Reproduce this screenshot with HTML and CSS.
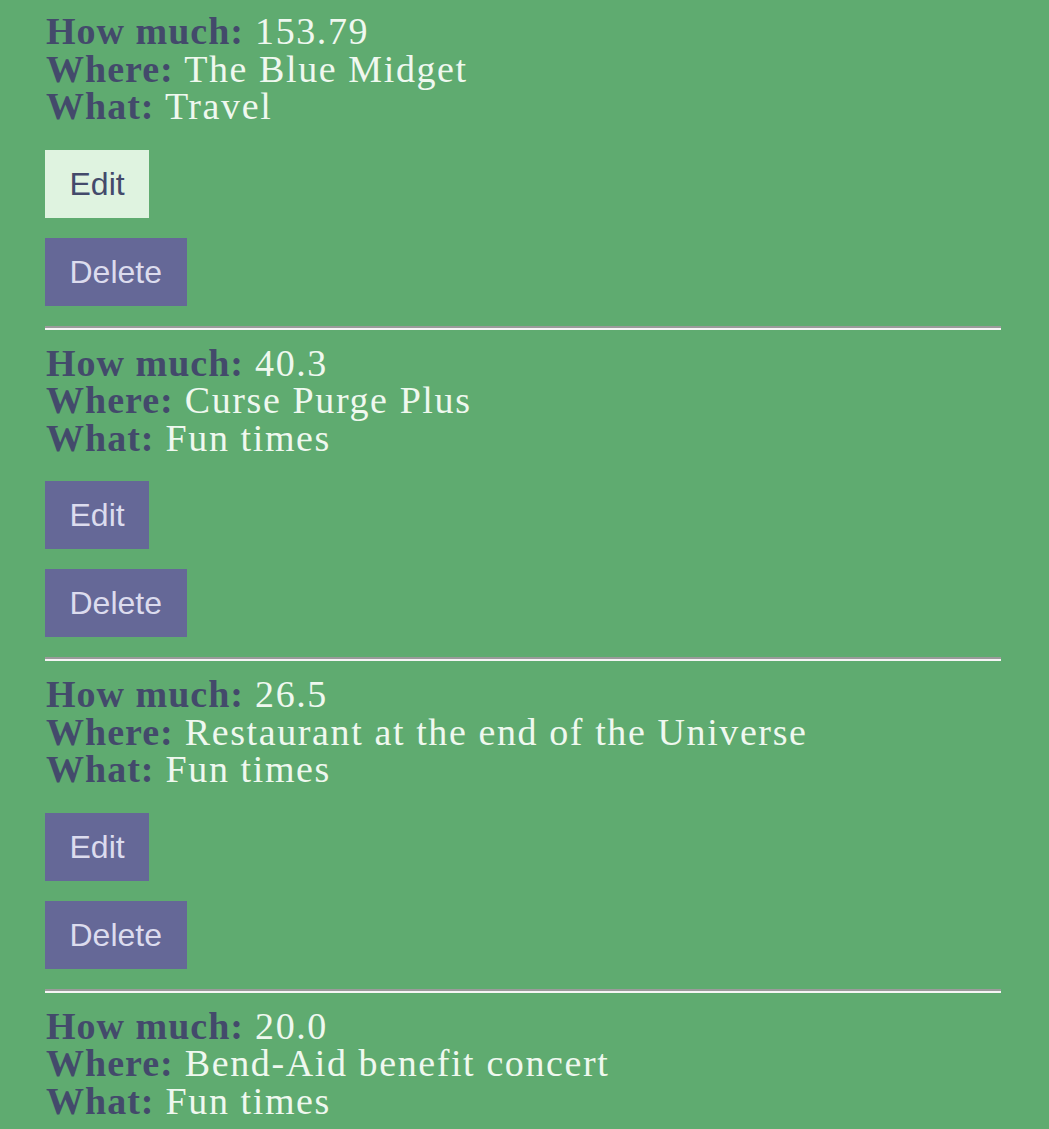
FILE: index.html
```html
<!DOCTYPE html>
<html>
<head>
<meta charset="utf-8">
<link rel="stylesheet" href="styles.css">
</head>
<body>
<div class="list">
  <div class="item">
    <div class="info">
      <div class="line"><span class="label">How much:</span> <span class="value">153.79</span></div>
      <div class="line"><span class="label">Where:</span> <span class="value">The Blue Midget</span></div>
      <div class="line"><span class="label">What:</span> <span class="value">Travel</span></div>
    </div>
    <div class="actions">
      <button class="btn btn-edit-active">Edit</button>
      <button class="btn">Delete</button>
    </div>
  </div>
  <hr class="sep">
  <div class="item">
    <div class="info">
      <div class="line"><span class="label">How much:</span> <span class="value">40.3</span></div>
      <div class="line"><span class="label">Where:</span> <span class="value">Curse Purge Plus</span></div>
      <div class="line"><span class="label">What:</span> <span class="value">Fun times</span></div>
    </div>
    <div class="actions">
      <button class="btn">Edit</button>
      <button class="btn">Delete</button>
    </div>
  </div>
  <hr class="sep">
  <div class="item">
    <div class="info">
      <div class="line"><span class="label">How much:</span> <span class="value">26.5</span></div>
      <div class="line"><span class="label">Where:</span> <span class="value">Restaurant at the end of the Universe</span></div>
      <div class="line"><span class="label">What:</span> <span class="value">Fun times</span></div>
    </div>
    <div class="actions">
      <button class="btn">Edit</button>
      <button class="btn">Delete</button>
    </div>
  </div>
  <hr class="sep">
  <div class="item">
    <div class="info">
      <div class="line"><span class="label">How much:</span> <span class="value">20.0</span></div>
      <div class="line"><span class="label">Where:</span> <span class="value">Bend-Aid benefit concert</span></div>
      <div class="line"><span class="label">What:</span> <span class="value">Fun times</span></div>
    </div>
    <div class="actions">
      <button class="btn">Edit</button>
      <button class="btn">Delete</button>
    </div>
  </div>
</div>
</body>
</html>
```
FILE: styles.css
```css
html, body {
  margin: 0;
  padding: 0;
  background: #5fab70;
}
body {
  font-family: "Liberation Serif", "DejaVu Serif", serif;
}
.list {
  padding: 13px 48px 0 45px;
}
.sep + .item {
  margin-top: 15px;
}
.info {
  font-size: 38px;
  line-height: 37.5px;
  letter-spacing: 1.6px;
  padding-left: 1px;
}
.label {
  font-weight: bold;
  color: #434a6b;
  letter-spacing: 1px;
}
.value {
  color: #eff8ef;
}
.actions {
  display: flex;
  flex-direction: column;
  align-items: flex-start;
  gap: 20px;
  margin-top: 24px;
  margin-bottom: 20px;
}
.btn {
  font-family: "Liberation Sans", Arial, sans-serif;
  font-size: 32px;
  line-height: 36px;
  padding: 16px 24.5px;
  border: none;
  margin: 0;
  background: #656897;
  color: #dcdcee;
}
.btn-edit-active {
  background: #dff3e0;
  color: #434a6b;
}
.sep {
  margin: 0;
  height: 0;
  border-style: solid;
  border-width: 2px 0 0 0;
  border-top-color: #9a9a9a;
  border-bottom: 2px solid #f5f5f5;
}
```
